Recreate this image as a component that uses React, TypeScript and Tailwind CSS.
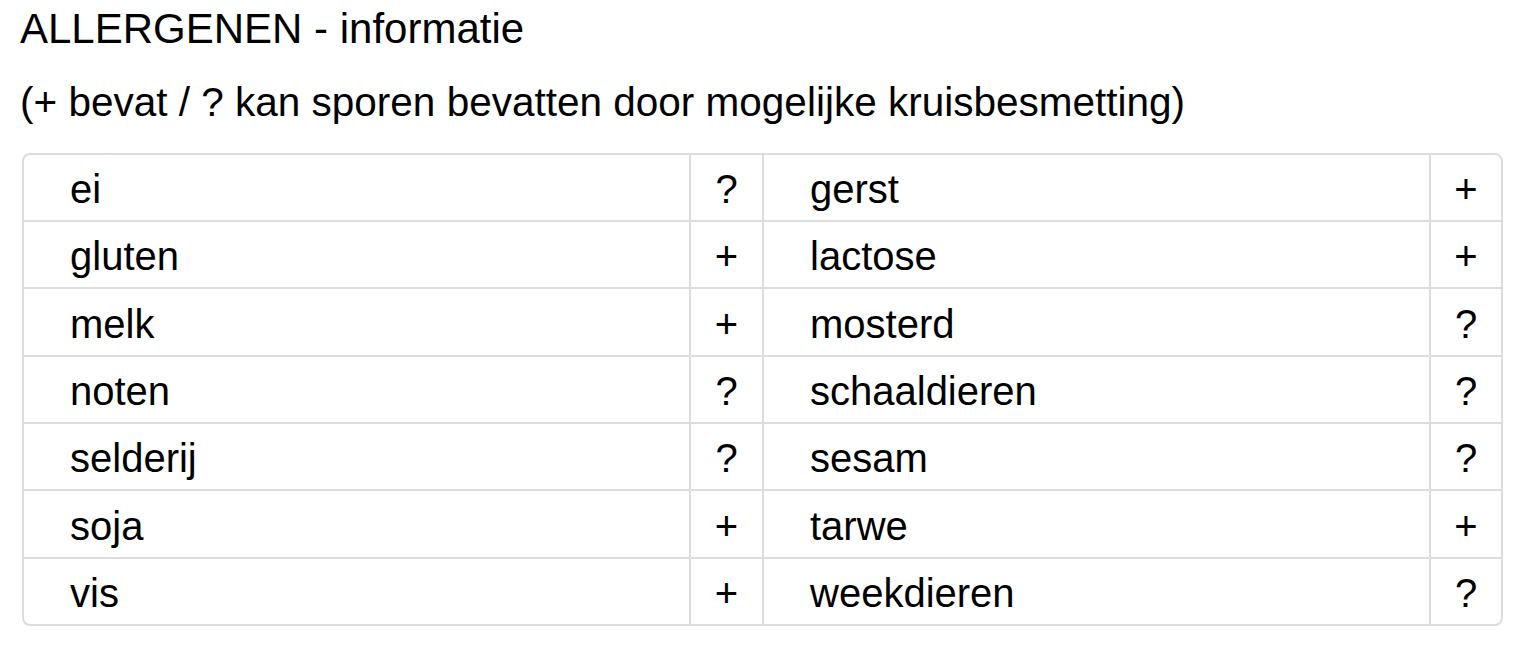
const ROWS: [string, string, string, string][] = [
  ['ei', '?', 'gerst', '+'],
  ['gluten', '+', 'lactose', '+'],
  ['melk', '+', 'mosterd', '?'],
  ['noten', '?', 'schaaldieren', '?'],
  ['selderij', '?', 'sesam', '?'],
  ['soja', '+', 'tarwe', '+'],
  ['vis', '+', 'weekdieren', '?'],
];

// row heights incl. top border, so the lines land on the reference pixels
const HEIGHTS = ['h-[65px]', 'h-[67px] border-t-2', 'h-[68px] border-t-2', 'h-[67px] border-t-2', 'h-[67px] border-t-2', 'h-[68px] border-t-2', 'h-[67px] border-t-2'];

export default function App() {
  return (
    <div className="min-h-[660px] bg-white pl-5 pt-[5px] text-black" style={{ fontFamily: '"Liberation Sans", Helvetica, Arial, sans-serif' }}>
      <h1 className="h-12 text-[42px] leading-[48px] font-normal">ALLERGENEN - informatie</h1>
      <p className="mt-[25px] h-12 text-[40.5px] leading-[48px]">(+ bevat / ? kan sporen bevatten door mogelijke kruisbesmetting)</p>

      <div className="mt-[26.5px] ml-[2px] w-[1481px] overflow-hidden rounded-[8px] border-2 border-[#dddddd] text-[40px]">
        {ROWS.map(([a, am, b, bm], i) => (
          <div key={a} className={`flex border-[#dddddd] ${HEIGHTS[i]}`}>
            <Name text={a} className="w-[665px]" />
            <Mark text={am} className="w-[73px]" />
            <Name text={b} className="w-[667px] border-l-2 border-[#dddddd]" />
            <Mark text={bm} className="w-[72px]" />
          </div>
        ))}
      </div>
    </div>
  );
}

function Name({ text, className }: { text: string; className: string }) {
  return <div className={`flex items-center pl-[46px] pt-[4px] leading-[46px] ${className}`}>{text}</div>;
}

function Mark({ text, className }: { text: string; className: string }) {
  return <div className={`flex items-center justify-center border-l-2 border-[#dddddd] pt-[4px] leading-[46px] ${className}`}>{text}</div>;
}
